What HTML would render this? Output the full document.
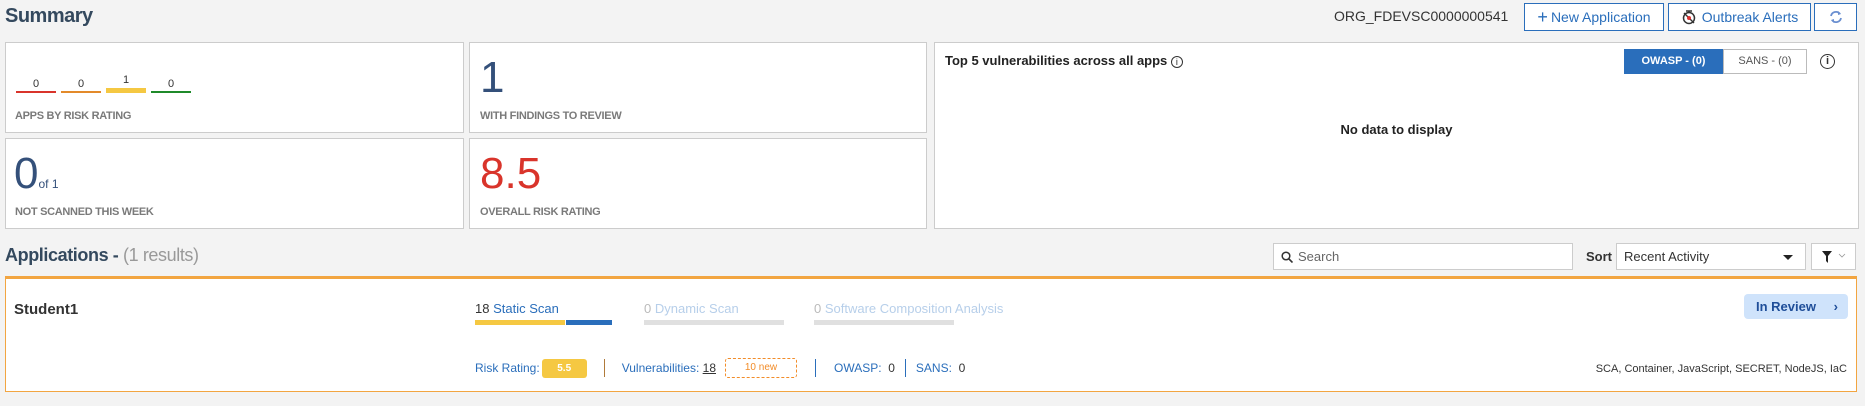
<!DOCTYPE html>
<html><head><meta charset="utf-8"><style>
*{box-sizing:border-box;margin:0;padding:0}
body{width:1865px;height:406px;background:#f3f3f3;font-family:"Liberation Sans",sans-serif;position:relative;overflow:hidden;color:#333}
.a{position:absolute;white-space:nowrap}
.card{position:absolute;background:#fff;border:1px solid #ccc}
.lbl{position:absolute;font-size:11px;font-weight:bold;color:#7a7a7a;letter-spacing:-0.3px}
.btn{position:absolute;border:1px solid #2a6ebb;background:#fff;color:#2a6ebb;font-size:14px;display:flex;align-items:center;justify-content:center;top:3px;height:28px}
.bar{position:absolute;height:5px}
.blue{color:#2a6ebb}
.sep{display:inline-block;width:1px;height:18px;vertical-align:middle;margin:0 16px}
</style></head><body>
<div class="a" style="left:5px;top:5px;font-size:20px;font-weight:bold;color:#34495e;letter-spacing:-0.5px">Summary</div>
<div class="a" style="left:1334px;top:8px;font-size:14px;color:#333">ORG_FDEVSC0000000541</div>
<div class="btn" style="left:1524px;width:140px"><span style="font-size:18px;margin-right:3px">+</span>New Application</div>
<div class="btn" style="left:1668px;width:143px"><svg width="16" height="16" viewBox="0 0 16 16" style="margin-right:5px"><circle cx="8" cy="9" r="5.5" fill="none" stroke="#333" stroke-width="1.5"/><path d="M5 2h6M8 2v2M3 4l10 10" stroke="#333" stroke-width="1.4"/><circle cx="8" cy="9" r="2" fill="#d33"/></svg>Outbreak Alerts</div>
<div class="btn" style="left:1814px;width:43px"><svg width="14" height="14" viewBox="0 0 14 14"><path d="M2 6a5 5 0 0 1 9-2M12 8a5 5 0 0 1-9 2" fill="none" stroke="#6a8fd0" stroke-width="1.8"/><path d="M9 1l3 3-3 1zM5 13l-3-3 3-1z" fill="#6a8fd0"/></svg></div>

<div class="card" style="left:5px;top:42px;width:459px;height:91px">
 <div class="a" style="left:10px;top:35px;width:40px;text-align:center;font-size:11px">0</div><div class="bar" style="left:10px;top:48px;width:40px;height:1.5px;background:#d9342b"></div>
 <div class="a" style="left:55px;top:35px;width:40px;text-align:center;font-size:11px">0</div><div class="bar" style="left:55px;top:48px;width:40px;height:1.5px;background:#e38a2a"></div>
 <div class="a" style="left:100px;top:31px;width:40px;text-align:center;font-size:11px">1</div><div class="bar" style="left:100px;top:45px;width:40px;height:5px;background:#f5c842"></div>
 <div class="a" style="left:145px;top:35px;width:40px;text-align:center;font-size:11px">0</div><div class="bar" style="left:145px;top:48px;width:40px;height:1.5px;background:#1f8a2a"></div>
 <div class="lbl" style="left:9px;top:67px">APPS BY RISK RATING</div>
</div>
<div class="card" style="left:469px;top:42px;width:458px;height:91px">
 <div class="a" style="left:10px;top:10px;font-size:44px;color:#34507a">1</div>
 <div class="lbl" style="left:10px;top:67px">WITH FINDINGS TO REVIEW</div>
</div>
<div class="card" style="left:5px;top:138px;width:459px;height:91px">
 <div class="a" style="left:8px;top:10px;font-size:44px;color:#34507a">0<span style="font-size:12px;color:#34507a">of 1</span></div>
 <div class="lbl" style="left:9px;top:67px">NOT SCANNED THIS WEEK</div>
</div>
<div class="card" style="left:469px;top:138px;width:458px;height:91px">
 <div class="a" style="left:10px;top:10px;font-size:44px;color:#d9342b">8.5</div>
 <div class="lbl" style="left:10px;top:67px">OVERALL RISK RATING</div>
</div>
<div class="card" style="left:934px;top:42px;width:925px;height:187px">
 <div class="a" style="left:10px;top:10px;font-size:13px;font-weight:bold;color:#222">Top 5 vulnerabilities across all apps <span style="font-weight:normal;display:inline-block;width:12px;height:12px;border:1px solid #333;border-radius:50%;font-size:9px;text-align:center;line-height:11px">i</span></div>
 <div class="a" style="left:689px;top:6px;width:99px;height:25px;background:#2a6ebb;color:#fff;font-size:11px;font-weight:bold;text-align:center;line-height:25px">OWASP - (0)</div>
 <div class="a" style="left:788px;top:6px;width:84px;height:25px;border:1px solid #bbb;color:#555;font-size:11px;text-align:center;line-height:23px">SANS - (0)</div>
 <div class="a" style="left:885px;top:11px;width:15px;height:15px;border:1.5px solid #333;border-radius:50%;font-size:11px;font-weight:bold;text-align:center;line-height:13px">i</div>
 <div class="a" style="left:0;width:923px;top:79px;text-align:center;font-size:13px;font-weight:bold;color:#222">No data to display</div>
</div>

<div class="a" style="left:5px;top:245px;font-size:18px;font-weight:bold;color:#34495e;letter-spacing:-0.4px">Applications - <span style="font-weight:normal;color:#999">(1 results)</span></div>
<div class="a" style="left:1273px;top:243px;width:300px;height:27px;background:#fff;border:1px solid #ccc">
 <svg class="a" style="left:7px;top:7px" width="12" height="12" viewBox="0 0 12 12"><circle cx="5" cy="5" r="3.8" fill="none" stroke="#333" stroke-width="1.5"/><path d="M8 8l3.5 3.5" stroke="#333" stroke-width="1.6"/></svg>
 <div class="a" style="left:24px;top:5px;font-size:13px;color:#666">Search</div>
</div>
<div class="a" style="left:1586px;top:249px;font-size:13px;font-weight:bold;color:#333">Sort</div>
<div class="a" style="left:1616px;top:243px;width:190px;height:27px;background:#fff;border:1px solid #ccc">
 <div class="a" style="left:7px;top:5px;font-size:13px;color:#333">Recent Activity</div>
 <div class="a" style="left:166px;top:11px;border-left:5px solid transparent;border-right:5px solid transparent;border-top:5px solid #222"></div>
</div>
<div class="a" style="left:1811px;top:243px;width:45px;height:27px;background:#fff;border:1px solid #ccc">
 <svg class="a" style="left:10px;top:7px" width="30" height="12" viewBox="0 0 30 12"><path d="M0 0h10L6 5v7L4 10V5z" fill="#222"/><path d="M17 3l3 3 3-3" fill="none" stroke="#999" stroke-width="0.8"/></svg>
</div>

<div class="a" style="left:5px;top:276px;width:1852px;height:116px;background:#fff;border:1px solid #f2a541;border-top:3px solid #f2a541">
 <div class="a" style="left:8px;top:22px;font-size:15px;font-weight:bold;color:#333">Student1</div>
 <div class="a" style="left:469px;top:22px;font-size:13px"><span style="color:#333">18</span> <span class="blue">Static Scan</span></div>
 <div class="bar" style="left:469px;top:41px;width:90px;background:#f5c842"></div>
 <div class="bar" style="left:560px;top:41px;width:46px;background:#2a6ebb"></div>
 <div class="a" style="left:638px;top:22px;font-size:13px"><span style="color:#bbb">0</span> <span style="color:#b7cfea">Dynamic Scan</span></div>
 <div class="bar" style="left:638px;top:41px;width:140px;background:#e0e0e0"></div>
 <div class="a" style="left:808px;top:22px;font-size:13px"><span style="color:#bbb">0</span> <span style="color:#b7cfea">Software Composition Analysis</span></div>
 <div class="bar" style="left:808px;top:41px;width:140px;background:#e0e0e0"></div>
 <div class="a" style="left:1738px;top:15px;width:104px;height:25px;background:#cfe3fb;border-radius:4px;color:#1f4e99;font-size:13px;font-weight:bold;line-height:25px;padding-left:12px">In Review <span style="position:absolute;right:10px">›</span></div>
 <div class="a" style="left:469px;top:79px;font-size:12px;line-height:20px;display:flex;align-items:center">
  <span class="blue">Risk Rating:</span><span style="display:inline-block;background:#f5c842;color:#fff;font-size:10px;font-weight:bold;width:45px;height:19px;line-height:19px;text-align:center;margin-left:2px;border-radius:3px">5.5</span>
  <span class="sep" style="background:#b07a3a;margin:0 17px"></span><span class="blue">Vulnerabilities:</span>&nbsp;<span style="text-decoration:underline">18</span>
  <span style="display:inline-block;border:1px dashed #f28c28;color:#f28c28;font-size:10px;width:72px;height:20px;line-height:18px;text-align:center;margin-left:9px;border-radius:3px">10 new</span>
  <span class="sep" style="background:#2a6ebb;margin:0 18px"></span><span class="blue">OWASP:</span>&nbsp;&nbsp;0<span class="sep" style="background:#2a6ebb;margin:0 10px"></span><span class="blue">SANS:</span>&nbsp;&nbsp;0
 </div>
 <div class="a" style="right:9px;top:84px;font-size:11px;color:#333">SCA, Container, JavaScript, SECRET, NodeJS, IaC</div>
</div>
</body></html>
